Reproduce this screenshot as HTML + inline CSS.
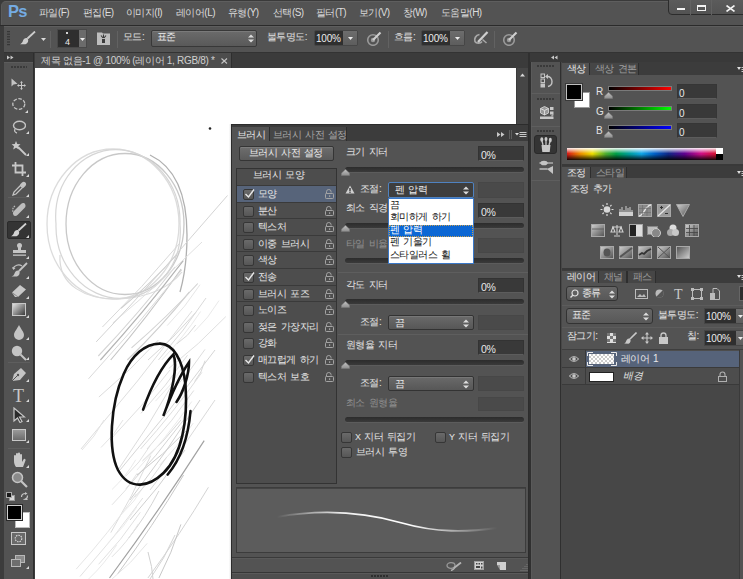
<!DOCTYPE html>
<html><head><meta charset="utf-8">
<style>
*{margin:0;padding:0;box-sizing:border-box}
html,body{width:743px;height:579px;overflow:hidden;background:#535353;font-family:"Liberation Sans",sans-serif;font-size:12px;color:#e0e0e0}
.a{position:absolute}
.t{position:absolute;white-space:nowrap;line-height:1}
</style></head><body>
<div class="a" style="left:0px;top:0px;width:743px;height:25px;background:#3a3a3a"></div>
<div class="a" style="left:1px;top:1px;width:742px;height:24px;background:#535353;border-top:1px solid #5e5e5e;border-left:1px solid #5a5a5a;border-radius:5px 0 0 0"></div>
<div class="a" style="left:0px;top:25px;width:743px;height:1px;background:#2b2b2b"></div>
<div class="a" style="left:0px;top:26px;width:743px;height:26px;background:#535353;border-top:1px solid #5e5e5e"></div>
<div class="a" style="left:0px;top:52px;width:743px;height:1px;background:#333"></div>
<div class="a" style="left:0px;top:26px;width:4px;height:553px;background:#3c3c3c"></div>
<div class="t" style="left:8px;top:3px;font-size:16.5px;font-weight:bold;color:#74abe2;letter-spacing:-0.8px">Ps</div>
<div class="t" style="left:39px;top:8px;font-size:10px;letter-spacing:-0.55px;word-spacing:1.5px;color:#dcdcdc">파일(F)</div>
<div class="t" style="left:83px;top:8px;font-size:10px;letter-spacing:-0.55px;word-spacing:1.5px;color:#dcdcdc">편집(E)</div>
<div class="t" style="left:126px;top:8px;font-size:10px;letter-spacing:-0.55px;word-spacing:1.5px;color:#dcdcdc">이미지(I)</div>
<div class="t" style="left:176px;top:8px;font-size:10px;letter-spacing:-0.55px;word-spacing:1.5px;color:#dcdcdc">레이어(L)</div>
<div class="t" style="left:228px;top:8px;font-size:10px;letter-spacing:-0.55px;word-spacing:1.5px;color:#dcdcdc">유형(Y)</div>
<div class="t" style="left:273px;top:8px;font-size:10px;letter-spacing:-0.55px;word-spacing:1.5px;color:#dcdcdc">선택(S)</div>
<div class="t" style="left:316px;top:8px;font-size:10px;letter-spacing:-0.55px;word-spacing:1.5px;color:#dcdcdc">필터(T)</div>
<div class="t" style="left:359px;top:8px;font-size:10px;letter-spacing:-0.55px;word-spacing:1.5px;color:#dcdcdc">보기(V)</div>
<div class="t" style="left:403px;top:8px;font-size:10px;letter-spacing:-0.55px;word-spacing:1.5px;color:#dcdcdc">창(W)</div>
<div class="t" style="left:441px;top:8px;font-size:10px;letter-spacing:-0.55px;word-spacing:1.5px;color:#dcdcdc">도움말(H)</div>
<div class="a" style="left:668px;top:-2px;width:77px;height:17px;background:linear-gradient(#5c5c5c,#535353);border:1px solid #2c2c2c;border-radius:0 0 0 4px"></div>
<div class="a" style="left:690px;top:0px;width:1px;height:15px;background:#333;border-right:1px solid #626262"></div>
<div class="a" style="left:711px;top:0px;width:1px;height:15px;background:#333;border-right:1px solid #626262"></div>
<div class="a" style="left:677px;top:8px;width:8px;height:2px;background:#f2f2f2"></div>
<div class="a" style="left:697px;top:5px;width:9px;height:6px;border:1px solid #f2f2f2;border-top-width:2px"></div>
<svg class="a" style="left:726px;top:5px;" width="9" height="7" viewBox="0 0 9 7"><path d="M0.5 0.5L8.5 6.5M8.5 0.5L0.5 6.5" stroke="#f2f2f2" stroke-width="1.6"/></svg>
<svg class="a" style="left:7px;top:30px;" width="3" height="16" viewBox="0 0 3 16"><rect x="0" y="1.0" width="3" height="1.2" fill="#363636"/><rect x="0" y="3.6" width="3" height="1.2" fill="#363636"/><rect x="0" y="6.2" width="3" height="1.2" fill="#363636"/><rect x="0" y="8.8" width="3" height="1.2" fill="#363636"/><rect x="0" y="11.4" width="3" height="1.2" fill="#363636"/><rect x="0" y="14.0" width="3" height="1.2" fill="#363636"/></svg>
<svg class="a" style="left:20px;top:31px;" width="16" height="14" viewBox="0 0 16 14"><path d="M15 0.5L7.5 7.5" stroke="#cdcdcd" stroke-width="1.8"/><path d="M7.5 7C4.5 6.5 3.3 8.5 2.8 10.2C2.3 11.8 1.2 12.6 0 13.2L5.5 13.3C8 12.3 8.8 10 7.8 8Z" fill="#cdcdcd"/></svg>
<svg class="a" style="left:41px;top:38px;" width="5" height="3" viewBox="0 0 5 3"><path d="M0 0h5L2.5 3z" fill="#dadada"/></svg>
<div class="a" style="left:50px;top:31px;width:1px;height:17px;background:#3d3d3d;border-right:1px solid #626262"></div>
<div class="a" style="left:117px;top:31px;width:1px;height:17px;background:#3d3d3d;border-right:1px solid #626262"></div>
<div class="a" style="left:388px;top:31px;width:1px;height:17px;background:#3d3d3d;border-right:1px solid #626262"></div>
<div class="a" style="left:494px;top:31px;width:1px;height:17px;background:#3d3d3d;border-right:1px solid #626262"></div>
<div class="a" style="left:57px;top:29px;width:30px;height:19px;background:#2e2e2e;border:1px solid #484848"></div>
<div class="a" style="left:79px;top:30px;width:7px;height:17px;background:#6b6b6b"></div>
<svg class="a" style="left:80px;top:38px;" width="5" height="3" viewBox="0 0 5 3"><path d="M0 0h5L2.5 3z" fill="#ececec"/></svg>
<div class="a" style="left:66px;top:32px;width:2px;height:2px;background:#d4d4d4"></div>
<div class="t" style="left:65px;top:38px;font-size:9px;color:#ececec">4</div>
<svg class="a" style="left:97px;top:31px;" width="13" height="14" viewBox="0 0 13 14"><path d="M0 1.5h5l1 1h7v11.5H0z" fill="#bdbdbd"/><path d="M4 4.5l2 2.5M6.5 3.5v3.5M9 4.5l-2 2.5" stroke="#3a3a3a" stroke-width="1.1" fill="none"/><rect x="5" y="8" width="3" height="4" fill="#3a3a3a"/></svg>
<div class="t" style="left:123px;top:32px;font-size:10px;letter-spacing:-0.55px;word-spacing:1.5px;">모드:</div>
<div class="a" style="left:151px;top:30px;width:106px;height:17px;border:1px solid #383838;border-radius:2px;background:linear-gradient(#6b6b6b,#595959);box-shadow:inset 0 1px #7a7a7a"></div>
<div class="t" style="left:157px;top:32px;font-size:10px;letter-spacing:-0.55px;word-spacing:1.5px;color:#f0f0f0">표준</div>
<svg class="a" style="left:248px;top:34px;" width="6" height="9" viewBox="0 0 6 9"><path d="M0 3.5L3 0.5L6 3.5zM0 5.5L3 8.5L6 5.5z" fill="#dcdcdc"/></svg>
<div class="t" style="left:267px;top:32px;font-size:10px;letter-spacing:-0.55px;word-spacing:1.5px;">불투명도:</div>
<div class="a" style="left:314px;top:30px;width:44px;height:16px;background:#2f2f2f;border:1px solid #464646;border-radius:2px"></div>
<div class="a" style="left:343px;top:31px;width:14px;height:14px;background:linear-gradient(#6d6d6d,#5d5d5d)"></div>
<svg class="a" style="left:348px;top:37px;" width="5" height="3" viewBox="0 0 5 3"><path d="M0 0h5L2.5 3z" fill="#ececec"/></svg>
<div class="t" style="left:316px;top:34px;font-size:10px;color:#ececec;letter-spacing:-0.2px">100%</div>
<div class="a" style="left:421px;top:30px;width:44px;height:16px;background:#2f2f2f;border:1px solid #464646;border-radius:2px"></div>
<div class="a" style="left:450px;top:31px;width:14px;height:14px;background:linear-gradient(#6d6d6d,#5d5d5d)"></div>
<svg class="a" style="left:455px;top:37px;" width="5" height="3" viewBox="0 0 5 3"><path d="M0 0h5L2.5 3z" fill="#ececec"/></svg>
<div class="t" style="left:423px;top:34px;font-size:10px;color:#ececec;letter-spacing:-0.2px">100%</div>
<div class="t" style="left:394px;top:32px;font-size:10px;letter-spacing:-0.55px;word-spacing:1.5px;">흐름:</div>
<svg class="a" style="left:366px;top:31px;" width="16" height="15" viewBox="0 0 16 15"><circle cx="7" cy="9" r="5.3" fill="none" stroke="#9a9a9a" stroke-width="1.6"/><circle cx="7" cy="9" r="2.2" fill="#9a9a9a"/><path d="M7 9L14.5 1.5" stroke="#cfcfcf" stroke-width="2.2"/></svg>
<svg class="a" style="left:502px;top:31px;" width="16" height="15" viewBox="0 0 16 15"><circle cx="7" cy="9" r="5.3" fill="none" stroke="#9a9a9a" stroke-width="1.6"/><circle cx="7" cy="9" r="2.2" fill="#9a9a9a"/><path d="M7 9L14.5 1.5" stroke="#cfcfcf" stroke-width="2.2"/></svg>
<svg class="a" style="left:473px;top:31px;" width="16" height="14" viewBox="0 0 16 14"><path d="M6.5 3.5C2.5 4 1 8 2 10.5C3.5 13 7.5 12.5 9 10.5" fill="none" stroke="#a8a8a8" stroke-width="1.7"/><path d="M5 11L14.5 1" stroke="#cfcfcf" stroke-width="2.2"/><path d="M9.5 8.5l4 3.5" stroke="#a8a8a8" stroke-width="1.5"/></svg>
<div class="a" style="left:4px;top:53px;width:29px;height:9px;background:#393939"></div>
<svg class="a" style="left:7px;top:55px;" width="7" height="5" viewBox="0 0 7 5"><path d="M0 0.5L3 2.5L0 4.5zM3.5 0.5L6.5 2.5L3.5 4.5z" fill="#c8c8c8"/></svg>
<div class="a" style="left:4px;top:62px;width:29px;height:517px;background:#535353;border-top:1px solid #5c5c5c"></div>
<div class="a" style="left:33px;top:53px;width:3px;height:526px;background:#3c3c3c;border-left:1px solid #2e2e2e"></div>
<svg class="a" style="left:11px;top:66px;" width="16" height="2" viewBox="0 0 16 2"><rect x="0" y="0" width="2" height="2" fill="#3a3a3a"/><rect x="3" y="0" width="2" height="2" fill="#3a3a3a"/><rect x="6" y="0" width="2" height="2" fill="#3a3a3a"/><rect x="9" y="0" width="2" height="2" fill="#3a3a3a"/><rect x="12" y="0" width="2" height="2" fill="#3a3a3a"/><rect x="15" y="0" width="2" height="2" fill="#3a3a3a"/></svg>
<svg class="a" style="left:11px;top:78px;" width="16" height="12" viewBox="0 0 16 12"><path d="M0.5 0.5L0.5 8.5L2.5 6.5L6.5 5.8Z" fill="#c4c4c4"/><path d="M10.5 4v7M7 7.5h7" stroke="#c8c8c8" stroke-width="1"/><path d="M10.5 3l-1.5 1.8h3zM10.5 12l-1.5-1.8h3zM6 7.5l1.8-1.5v3zM15 7.5l-1.8-1.5v3z" fill="#c8c8c8"/></svg>
<svg class="a" style="left:12px;top:98px;" width="14" height="12" viewBox="0 0 14 12"><ellipse cx="6.8" cy="6" rx="6" ry="5.3" fill="none" stroke="#c4c4c4" stroke-width="1.3" stroke-dasharray="3.5 1.6"/></svg>
<svg class="a" style="left:25px;top:110px;" width="3" height="3" viewBox="0 0 3 3"><path d="M3 0V3H0z" fill="#d8d8d8"/></svg>
<svg class="a" style="left:12px;top:120px;" width="14" height="14" viewBox="0 0 14 14"><ellipse cx="7.5" cy="5.5" rx="6" ry="4.3" fill="none" stroke="#c4c4c4" stroke-width="1.4"/><path d="M3 9C2 11 3 12.5 5 13" fill="none" stroke="#c4c4c4" stroke-width="1.3"/></svg>
<svg class="a" style="left:26px;top:131px;" width="3" height="3" viewBox="0 0 3 3"><path d="M3 0V3H0z" fill="#d8d8d8"/></svg>
<svg class="a" style="left:11px;top:140px;" width="17" height="16" viewBox="0 0 17 16"><path d="M5 1l1.3 3 3.2.3-2.4 2 .8 3.2L5 7.8 2.2 9.5 3 6.3.6 4.3l3.2-.3z" fill="#cacaca"/><path d="M7 7l8 8" stroke="#cacaca" stroke-width="1.8"/></svg>
<svg class="a" style="left:26px;top:153px;" width="3" height="3" viewBox="0 0 3 3"><path d="M3 0V3H0z" fill="#d8d8d8"/></svg>
<svg class="a" style="left:12px;top:162px;" width="15" height="14" viewBox="0 0 15 14"><path d="M3.5 0v10.5H14M0 3.5h10.5V14" fill="none" stroke="#c8c8c8" stroke-width="1.8"/></svg>
<svg class="a" style="left:26px;top:174px;" width="3" height="3" viewBox="0 0 3 3"><path d="M3 0V3H0z" fill="#d8d8d8"/></svg>
<svg class="a" style="left:12px;top:181px;" width="15" height="15" viewBox="0 0 15 15"><path d="M1 14l1-3 6.5-6.5 2 2L4 13z" fill="none" stroke="#c4c4c4" stroke-width="1.3"/><path d="M8 3.5l2-2c1-1 2.5-1 3.4 0s1 2.4 0 3.4l-2 2z" fill="#c4c4c4"/></svg>
<svg class="a" style="left:26px;top:194px;" width="3" height="3" viewBox="0 0 3 3"><path d="M3 0V3H0z" fill="#d8d8d8"/></svg>
<div class="a" style="left:8px;top:197px;width:22px;height:1px;background:#424242;border-bottom:1px solid #5e5e5e"></div>
<svg class="a" style="left:11px;top:201px;" width="16" height="16" viewBox="0 0 16 16"><path d="M3 10l7-7c1.5-1.5 3.5-1 4 0s1 2.5-.5 4l-7 7c-1.5 1.5-3.5 1-4 0s-1-2.5.5-4z" fill="#bdbdbd"/><path d="M4 5c-3 2-3 6 0 9" fill="none" stroke="#bdbdbd" stroke-width="1.2" stroke-dasharray="1.5 1"/></svg>
<svg class="a" style="left:26px;top:215px;" width="3" height="3" viewBox="0 0 3 3"><path d="M3 0V3H0z" fill="#d8d8d8"/></svg>
<div class="a" style="left:7px;top:221px;width:24px;height:18px;background:#343434;border:1px solid #2a2a2a;border-radius:2px"></div>
<svg class="a" style="left:11px;top:223px;" width="16" height="14" viewBox="0 0 16 14"><path d="M15 0.5L7.5 7.5" stroke="#d2d2d2" stroke-width="1.8"/><path d="M7.5 7C4.5 6.5 3.3 8.5 2.8 10.2C2.3 11.8 1.2 12.6 0 13.2L5.5 13.3C8 12.3 8.8 10 7.8 8Z" fill="#d2d2d2"/></svg>
<svg class="a" style="left:26px;top:235px;" width="3" height="3" viewBox="0 0 3 3"><path d="M3 0V3H0z" fill="#d8d8d8"/></svg>
<svg class="a" style="left:12px;top:243px;" width="15" height="14" viewBox="0 0 15 14"><circle cx="7.5" cy="2.5" r="2.5" fill="#c4c4c4"/><path d="M6 4h3v3h5v3H1V7h5z" fill="#c4c4c4"/><rect x="1" y="11.5" width="13" height="1.3" fill="#c4c4c4"/></svg>
<svg class="a" style="left:26px;top:256px;" width="3" height="3" viewBox="0 0 3 3"><path d="M3 0V3H0z" fill="#d8d8d8"/></svg>
<svg class="a" style="left:11px;top:262px;" width="17" height="16" viewBox="0 0 17 16"><path d="M16 1L8 9" stroke="#c4c4c4" stroke-width="1.8"/><path d="M8 8.5C5 8 4 10 3.5 11.5 3 13 2 14 0.5 14.5L6 14.5C8.5 13.5 9 11 8.5 9.5z" fill="#c4c4c4"/><path d="M2 7c1-4 6-5 9-3" fill="none" stroke="#c4c4c4" stroke-width="1.2"/><path d="M1 5l1.5 3 2-2z" fill="#c4c4c4"/></svg>
<svg class="a" style="left:26px;top:276px;" width="3" height="3" viewBox="0 0 3 3"><path d="M3 0V3H0z" fill="#d8d8d8"/></svg>
<svg class="a" style="left:11px;top:283px;" width="16" height="14" viewBox="0 0 16 14"><path d="M1 9.5L9 2l6 4.5-8 7.5H4z" fill="#c8c8c8"/><path d="M1 9.5l6 4.5" stroke="#8a8a8a" stroke-width="1"/></svg>
<svg class="a" style="left:26px;top:296px;" width="3" height="3" viewBox="0 0 3 3"><path d="M3 0V3H0z" fill="#d8d8d8"/></svg>
<div class="a" style="left:12px;top:303px;width:14px;height:13px;background:linear-gradient(135deg,#e0e0e0,#3a3a3a);border:1px solid #c8c8c8"></div>
<svg class="a" style="left:26px;top:315px;" width="3" height="3" viewBox="0 0 3 3"><path d="M3 0V3H0z" fill="#d8d8d8"/></svg>
<svg class="a" style="left:13px;top:325px;" width="12" height="15" viewBox="0 0 12 15"><path d="M6 0C4 4 1 7 1 10a5 5 0 0 0 10 0C11 7 8 4 6 0z" fill="#c4c4c4"/></svg>
<svg class="a" style="left:26px;top:337px;" width="3" height="3" viewBox="0 0 3 3"><path d="M3 0V3H0z" fill="#d8d8d8"/></svg>
<svg class="a" style="left:11px;top:345px;" width="16" height="16" viewBox="0 0 16 16"><circle cx="6" cy="6" r="5.2" fill="#c4c4c4"/><path d="M9.5 9.5L15 15" stroke="#c4c4c4" stroke-width="2"/></svg>
<svg class="a" style="left:26px;top:357px;" width="3" height="3" viewBox="0 0 3 3"><path d="M3 0V3H0z" fill="#d8d8d8"/></svg>
<div class="a" style="left:8px;top:362px;width:22px;height:1px;background:#424242;border-bottom:1px solid #5e5e5e"></div>
<svg class="a" style="left:11px;top:367px;" width="16" height="15" viewBox="0 0 16 15"><path d="M1 14L3 7 10 1l5 5-6 7z" fill="#c4c4c4"/><path d="M1 14l5-5" stroke="#535353" stroke-width="1"/><circle cx="7" cy="8" r="1.2" fill="#535353"/></svg>
<svg class="a" style="left:26px;top:379px;" width="3" height="3" viewBox="0 0 3 3"><path d="M3 0V3H0z" fill="#d8d8d8"/></svg>
<div class="t" style="left:13px;top:387px;font-family:Liberation Serif,serif;font-size:18px;color:#c8c8c8">T</div>
<svg class="a" style="left:26px;top:399px;" width="3" height="3" viewBox="0 0 3 3"><path d="M3 0V3H0z" fill="#d8d8d8"/></svg>
<svg class="a" style="left:13px;top:407px;" width="13" height="16" viewBox="0 0 13 16"><path d="M1 1v13l3.5-3 2.5 4.5 2-1-2.5-4.5 5 0z" fill="#2a2a2a" stroke="#c8c8c8" stroke-width="1.2"/></svg>
<svg class="a" style="left:26px;top:419px;" width="3" height="3" viewBox="0 0 3 3"><path d="M3 0V3H0z" fill="#d8d8d8"/></svg>
<div class="a" style="left:12px;top:429px;width:14px;height:12px;background:linear-gradient(#9a9a9a,#6c6c6c);border:1px solid #c8c8c8"></div>
<svg class="a" style="left:26px;top:440px;" width="3" height="3" viewBox="0 0 3 3"><path d="M3 0V3H0z" fill="#d8d8d8"/></svg>
<div class="a" style="left:8px;top:448px;width:22px;height:1px;background:#424242;border-bottom:1px solid #5e5e5e"></div>
<svg class="a" style="left:11px;top:452px;" width="17" height="17" viewBox="0 0 17 17"><path d="M3 9V4a1 1 0 0 1 2 0v4V2a1 1 0 0 1 2 0v6V1.5a1 1 0 0 1 2 0V8V3a1 1 0 0 1 2 0v7l1.5-2.5a1 1 0 0 1 2 1L12 15H5C3.5 13 3 11 3 9z" fill="#c8c8c8"/></svg>
<svg class="a" style="left:26px;top:465px;" width="3" height="3" viewBox="0 0 3 3"><path d="M3 0V3H0z" fill="#d8d8d8"/></svg>
<svg class="a" style="left:11px;top:471px;" width="17" height="17" viewBox="0 0 17 17"><circle cx="6.5" cy="6.5" r="5" fill="#8a8a8a" stroke="#c4c4c4" stroke-width="1.5"/><path d="M10 10l6 6" stroke="#c4c4c4" stroke-width="2.2"/></svg>
<svg class="a" style="left:6px;top:492px;" width="9" height="9" viewBox="0 0 9 9"><rect x="3.5" y="3.5" width="5" height="5" fill="#d8d8d8" stroke="#999" stroke-width="1"/><rect x="0.5" y="0.5" width="5" height="5" fill="#1a1a1a" stroke="#aaa" stroke-width="1"/></svg>
<svg class="a" style="left:20px;top:492px;" width="9" height="9" viewBox="0 0 9 9"><path d="M1.5 5C1.5 3 3 1.5 5.5 1.5" fill="none" stroke="#c4c4c4" stroke-width="1.2"/><path d="M5 0L7.5 1.5 5 3z" fill="#c4c4c4"/><path d="M7.5 3.5C7.5 6 6 7.5 3.5 7.5" fill="none" stroke="#c4c4c4" stroke-width="1.2"/><path d="M6 5.5L8 8H5z" fill="#c4c4c4"/></svg>
<div class="a" style="left:15px;top:512px;width:15px;height:16px;background:#fff;border:1px solid #bcbcbc"></div>
<div class="a" style="left:7px;top:505px;width:15px;height:15px;background:#000;border:1px solid #cfcfcf;box-shadow:0 0 0 1px #2a2a2a"></div>
<div class="a" style="left:11px;top:532px;width:15px;height:13px;background:#6a6a6a;border:1px solid #c8c8c8"></div>
<svg class="a" style="left:14px;top:534px;" width="9" height="9" viewBox="0 0 9 9"><circle cx="4.5" cy="4.5" r="3.3" fill="none" stroke="#e0e0e0" stroke-width="1.1" stroke-dasharray="1.5 1"/></svg>
<svg class="a" style="left:11px;top:555px;" width="15" height="12" viewBox="0 0 15 12"><rect x="4.5" y="0.5" width="9" height="7" fill="#8a8a8a" stroke="#b8b8b8"/><rect x="0.5" y="4.5" width="9" height="7" fill="#6e6e6e" stroke="#b8b8b8"/></svg>
<svg class="a" style="left:26px;top:566px;" width="3" height="3" viewBox="0 0 3 3"><path d="M3 0V3H0z" fill="#d8d8d8"/></svg>
<div class="a" style="left:36px;top:53px;width:494px;height:15px;background:#3b3b3b"></div>
<div class="a" style="left:35px;top:53px;width:197px;height:15px;background:#4d4d4d;border-right:1px solid #2e2e2e"></div>
<div class="t" style="left:41px;top:56px;font-size:10px;letter-spacing:-0.3px;color:#d0d0d0">제목 없음-1 @ 100% (레이어 1, RGB/8) *</div>
<svg class="a" style="left:221px;top:58px;" width="7" height="6" viewBox="0 0 7 6"><path d="M0.5 0.5L6 5.5M6 0.5L0.5 5.5" stroke="#c4c4c4" stroke-width="1.1"/></svg>
<div class="a" style="left:35px;top:68px;width:481px;height:511px;background:#fff"></div>
<div class="a" style="left:516px;top:68px;width:12px;height:56px;background:#464646;border-left:1px solid #3a3a3a"></div>
<svg class="a" style="left:520px;top:73px;" width="5" height="4" viewBox="0 0 5 4"><path d="M0 3.5L2.5 0.5L5 3.5z" fill="#d8d8d8"/></svg>
<div class="a" style="left:528px;top:53px;width:3px;height:526px;background:#303030"></div>
<svg class="a" style="left:0;top:0" width="516" height="579" viewBox="0 0 516 579"><defs><clipPath id="cc"><rect x="35" y="68" width="481" height="511"/></clipPath></defs><g clip-path="url(#cc)"><path d="M47 224A66 75 0 1 0 179 224A66 75 0 1 0 47 224" fill="none" stroke="#dcdcdc" stroke-width="1.3"/><path d="M66 224A59 70.5 0 1 0 184 224A59 70.5 0 1 0 66 224" fill="none" stroke="#c8c8c8" stroke-width="1.3"/><path d="M56 224A62 70 -8 1 0 180 224A62 70 -8 1 0 56 224" fill="none" stroke="#d6d6d6" stroke-width="1.2"/><path d="M150 155C175 167 187 195 187 235C187 258 184 278 180 292" fill="none" stroke="#b0b0b0" stroke-width="1.3"/><path d="M60 255C58 285 85 300 120 299C150 297 170 287 182 272" fill="none" stroke="#dadada" stroke-width="1.2"/><path d="M98.3 356Q138.65 313.5 175 267" fill="none" stroke="#d4d4d4" stroke-width="1.1"/><path d="M100.4 360Q143.85000000000002 312.35 183.3 260.7" fill="none" stroke="#b4b4b4" stroke-width="1.2"/><path d="M110.7 360Q147.95 316.5 181.2 269" fill="none" stroke="#c4c4c4" stroke-width="1.1"/><path d="M127.3 360Q160.4 327.9 189.5 291.8" fill="none" stroke="#cecece" stroke-width="1.1"/><path d="M131.5 347.8Q166.65 317.65 197.8 283.5" fill="none" stroke="#d2d2d2" stroke-width="1.1"/><path d="M148 360Q173.85 338.25 195.7 312.5" fill="none" stroke="#d8d8d8" stroke-width="1.0"/><path d="M112.8 323Q159.4 284.5 202 242" fill="none" stroke="#e0e0e0" stroke-width="1.0"/><path d="M102.4 327Q142.7 287.5 179 244" fill="none" stroke="#d8d8d8" stroke-width="1.0"/><path d="M121 308.4Q151.0 283.45 177 254.5" fill="none" stroke="#cdcdcd" stroke-width="1.1"/><path d="M158.4 360Q184.2 331.0 206 298" fill="none" stroke="#dadada" stroke-width="1.0"/><path d="M177 343.6Q188.35 336.3 195.7 325" fill="none" stroke="#d8d8d8" stroke-width="1.0"/><path d="M96.2 341.9Q163.85 270.7 227.5 195.5" fill="none" stroke="#d4d4d4" stroke-width="1.0"/><path d="M88.5 378.8Q137.15 326.4 181.8 270" fill="none" stroke="#dadada" stroke-width="1.0"/><path d="M98.9 397Q130.65 370.5 158.4 340" fill="none" stroke="#dcdcdc" stroke-width="1.0"/><path d="M168.8 368.4Q199.3 344.5 225.8 316.6" fill="none" stroke="#e0e0e0" stroke-width="1.0"/><path d="M194.7 381.4Q201.85 373.04999999999995 205 360.7" fill="none" stroke="#d8d8d8" stroke-width="1.0"/><path d="M81 449Q138.5 382.0 192 311" fill="none" stroke="#dedede" stroke-width="1.0"/><path d="M120 470Q169.5 412.0 215 350" fill="none" stroke="#d6d6d6" stroke-width="1.0"/><path d="M130 500Q167.0 452.0 200 400" fill="none" stroke="#d0d0d0" stroke-width="1.0"/><path d="M150 490Q184.5 447.0 215 400" fill="none" stroke="#dadada" stroke-width="1.0"/><path d="M110 440Q142.0 407.0 170 370" fill="none" stroke="#e0e0e0" stroke-width="1.0"/><path d="M109.5 578Q158.85 511.3 204.2 440.6" fill="none" stroke="#a2a2a2" stroke-width="1.2"/><path d="M117.7 573.8Q152.65 526.4 183.6 475" fill="none" stroke="#c8c8c8" stroke-width="1.0"/><path d="M110.8 532.6Q132.75 496.15 150.7 455.7" fill="none" stroke="#dcdcdc" stroke-width="1.0"/><path d="M128.7 538Q145.8 516.5 158.9 491" fill="none" stroke="#d4d4d4" stroke-width="1.0"/><path d="M147.9 578Q180.15 534.65 208.4 487.3" fill="none" stroke="#d4d4d4" stroke-width="1.0"/><path d="M148 552Q152.5 567.5 153 579" fill="none" stroke="#d0d0d0" stroke-width="1.0"/><path d="M158.9 578Q171.9 553.2 180.9 524.4" fill="none" stroke="#c8c8c8" stroke-width="1.0"/><path d="M150 579Q164.5 559.0 175 535" fill="none" stroke="#d4d4d4" stroke-width="1.0"/><path d="M82 450Q95.0 437.0 104 420" fill="none" stroke="#e4e4e4" stroke-width="1.0"/><path d="M101 447.5Q114.0 435.75 123 420" fill="none" stroke="#e4e4e4" stroke-width="1.0"/><path d="M130 520Q159.5 487.0 185 450" fill="none" stroke="#d0d0d0" stroke-width="1.0"/><path d="M126 488.7Q156.8 456.35 183.6 420" fill="none" stroke="#d4d4d4" stroke-width="1.0"/><path d="M137 475Q163.5 455.0 186 431" fill="none" stroke="#cccccc" stroke-width="1.0"/><path d="M142.4 461Q163.7 442.5 181 420" fill="none" stroke="#d8d8d8" stroke-width="1.0"/><path d="M118 470Q148.5 427.0 175 380" fill="none" stroke="#dcdcdc" stroke-width="1.0"/><path d="M112.0 504.8Q126.65 491.0 137.3 473.2" fill="none" stroke="#e2e2e2" stroke-width="1.0"/><path d="M112.1 489.4Q125.89999999999999 476.6 135.7 459.8" fill="none" stroke="#eaeaea" stroke-width="1.0"/><path d="M125.6 476.4Q139.89999999999998 463.0 150.2 445.6" fill="none" stroke="#e2e2e2" stroke-width="1.0"/><path d="M194.3 331.6Q208.65 318.1 219.0 300.6" fill="none" stroke="#eaeaea" stroke-width="1.0"/><path d="M88.6 579Q104.65 563.95 116.7 544.9" fill="none" stroke="#eaeaea" stroke-width="1.0"/><path d="M76.2 569.1Q108.30000000000001 533.5 136.4 493.9" fill="none" stroke="#e6e6e6" stroke-width="1.0"/><path d="M111.9 556.9Q127.15 542.4 138.4 523.9" fill="none" stroke="#e2e2e2" stroke-width="1.0"/><path d="M147.0 449.0Q172.4 421.75 193.8 390.5" fill="none" stroke="#dedede" stroke-width="1.0"/><path d="M159.7 465.1Q178.45 446.15 193.2 423.2" fill="none" stroke="#e6e6e6" stroke-width="1.0"/><path d="M141.0 413.3Q166.25 386.25 187.5 355.2" fill="none" stroke="#dedede" stroke-width="1.0"/><path d="M155.5 401.1Q171.2 386.0 182.9 366.9" fill="none" stroke="#eaeaea" stroke-width="1.0"/><path d="M98.6 564.3Q121.45 540.3 140.3 512.3" fill="none" stroke="#e2e2e2" stroke-width="1.0"/><path d="M168.5 395.1Q188.75 374.25 205.0 349.4" fill="none" stroke="#dedede" stroke-width="1.0"/><path d="M140.6 449.0Q173.25 412.7 201.9 372.4" fill="none" stroke="#dedede" stroke-width="1.0"/><path d="M136.9 470.1Q166.3 437.85 191.7 401.6" fill="none" stroke="#eaeaea" stroke-width="1.0"/><path d="M121.3 514.4Q134.75 502.1 144.2 485.8" fill="none" stroke="#eaeaea" stroke-width="1.0"/><path d="M134.6 497.2Q152.64999999999998 479.15 166.7 457.1" fill="none" stroke="#dedede" stroke-width="1.0"/><path d="M80.0 576.5Q113.4 539.25 142.8 498.0" fill="none" stroke="#e2e2e2" stroke-width="1.0"/><path d="M108.4 542.5Q124.55 526.8 136.7 507.1" fill="none" stroke="#eaeaea" stroke-width="1.0"/><path d="M161.9 359.9Q183.25 337.7 200.6 311.5" fill="none" stroke="#eaeaea" stroke-width="1.0"/><path d="M167.2 325.6Q185.6 307.15 200.0 284.7" fill="none" stroke="#e6e6e6" stroke-width="1.0"/><path d="M112.1 579Q131.64999999999998 563.2 147.2 543.4" fill="none" stroke="#e6e6e6" stroke-width="1.0"/><path d="M159.4 343.6C173 343 183 360 185.5 385C188 420 182 455 163.5 473C150 486 130 492 118 470C108 450 110 405 123.7 373.9C132 355 145 344 159.4 343.6" fill="none" stroke="#111" stroke-width="2.6" stroke-linecap="round"/><path d="M143.1 409.6C150 390 160 368 173.4 354.4C178 365 172 395 163.3 415.9C170 398 180 375 189 362.2C189 375 183 393 176.5 401.9" fill="none" stroke="#111" stroke-width="2.6" stroke-linecap="round"/><path d="M190.5 411C188 440 180 460 167.7 474.5" fill="none" stroke="#111" stroke-width="2.6" stroke-linecap="round"/><circle cx="210" cy="128.5" r="1.3" fill="#222"/></g></svg>
<div class="a" style="left:229px;top:124px;width:2px;height:455px;background:linear-gradient(90deg,rgba(0,0,0,0),rgba(0,0,0,.12))"></div>
<div class="a" style="left:231px;top:124px;width:298px;height:455px;background:#535353;border:1px solid #2c2c2c;border-bottom:none"></div>
<div class="a" style="left:232px;top:125px;width:296px;height:16px;background:#3c3c3c"></div>
<div class="a" style="left:232px;top:127px;width:37px;height:14px;background:#535353"></div>
<div class="t" style="left:237px;top:130px;font-size:10px;letter-spacing:-0.55px;word-spacing:1.5px;color:#e8e8e8">브러시</div>
<div class="a" style="left:269px;top:127px;width:78px;height:14px;background:#464646;border-left:1px solid #2e2e2e;border-right:1px solid #2e2e2e"></div>
<div class="t" style="left:273px;top:130px;font-size:10px;letter-spacing:-0.55px;word-spacing:1.5px;color:#a8a8a8">브러시 사전 설정</div>
<svg class="a" style="left:497px;top:132px;" width="8" height="5" viewBox="0 0 8 5"><path d="M0 0L3.5 2.5L0 5zM4 0L7.5 2.5L4 5z" fill="#c8c8c8"/></svg>
<div class="a" style="left:509px;top:130px;width:1px;height:9px;background:#5e5e5e"></div>
<div class="a" style="left:511px;top:130px;width:1px;height:9px;background:#5e5e5e"></div>
<svg class="a" style="left:515px;top:132px;" width="12" height="6" viewBox="0 0 12 6"><path d="M0 1h4L2 3.5z" fill="#e0e0e0"/><path d="M4.5 0.5h7M4.5 2.5h7M4.5 4.5h7" stroke="#c8c8c8" stroke-width="1"/></svg>
<div class="a" style="left:239px;top:146px;width:95px;height:15px;background:linear-gradient(#6e6e6e,#5a5a5a);border:1px solid #353535;border-radius:2px;box-shadow:inset 0 1px #7c7c7c"></div>
<div class="t" style="left:249px;top:148px;font-size:10px;letter-spacing:-0.55px;word-spacing:1.5px;color:#ececec">브러시 사전 설정</div>
<div class="a" style="left:236px;top:168px;width:101px;height:316px;background:#4d4d4d;border:1px solid #333"></div>
<div class="a" style="left:237px;top:169px;width:99px;height:17px;background:#4d4d4d;border-bottom:1px solid #3a3a3a"></div>
<div class="t" style="left:253px;top:170px;font-size:10px;letter-spacing:-0.55px;word-spacing:1.5px;color:#e6e6e6">브러시 모양</div>
<div class="a" style="left:237px;top:186px;width:99px;height:17px;background:#57647a"></div>
<div class="a" style="left:237px;top:202px;width:99px;height:1px;background:#3a3a3a"></div>
<div class="a" style="left:243px;top:189px;width:11px;height:11px;background:linear-gradient(#6a6a6a,#565656);border:1px solid #363636;border-radius:2px"></div>
<svg class="a" style="left:244px;top:188px;" width="11" height="11" viewBox="0 0 11 11"><path d="M1.5 6l3 3L10 1.5" fill="none" stroke="#e8e8e8" stroke-width="1.4"/></svg>
<div class="t" style="left:258px;top:189px;font-size:10px;letter-spacing:-0.55px;word-spacing:1.5px;color:#e6e6e6">모양</div>
<svg class="a" style="left:325px;top:189px;" width="9" height="10" viewBox="0 0 9 10"><path d="M1.5 4.5V2.8a2.3 2.3 0 0 1 4.6 0V3.5" fill="none" stroke="#a4a4a4" stroke-width="1"/><rect x="0.5" y="4.5" width="8" height="5" rx="0.8" fill="none" stroke="#a4a4a4" stroke-width="1"/><rect x="4" y="6.3" width="1.2" height="1.6" fill="#a4a4a4"/></svg>
<div class="a" style="left:237px;top:218px;width:99px;height:1px;background:#3a3a3a"></div>
<div class="a" style="left:243px;top:206px;width:11px;height:11px;background:linear-gradient(#6a6a6a,#565656);border:1px solid #363636;border-radius:2px"></div>
<div class="t" style="left:258px;top:206px;font-size:10px;letter-spacing:-0.55px;word-spacing:1.5px;color:#e6e6e6">분산</div>
<svg class="a" style="left:325px;top:206px;" width="9" height="10" viewBox="0 0 9 10"><path d="M1.5 4.5V2.8a2.3 2.3 0 0 1 4.6 0V3.5" fill="none" stroke="#a4a4a4" stroke-width="1"/><rect x="0.5" y="4.5" width="8" height="5" rx="0.8" fill="none" stroke="#a4a4a4" stroke-width="1"/><rect x="4" y="6.3" width="1.2" height="1.6" fill="#a4a4a4"/></svg>
<div class="a" style="left:237px;top:235px;width:99px;height:1px;background:#3a3a3a"></div>
<div class="a" style="left:243px;top:222px;width:11px;height:11px;background:linear-gradient(#6a6a6a,#565656);border:1px solid #363636;border-radius:2px"></div>
<div class="t" style="left:258px;top:222px;font-size:10px;letter-spacing:-0.55px;word-spacing:1.5px;color:#e6e6e6">텍스처</div>
<svg class="a" style="left:325px;top:222px;" width="9" height="10" viewBox="0 0 9 10"><path d="M1.5 4.5V2.8a2.3 2.3 0 0 1 4.6 0V3.5" fill="none" stroke="#a4a4a4" stroke-width="1"/><rect x="0.5" y="4.5" width="8" height="5" rx="0.8" fill="none" stroke="#a4a4a4" stroke-width="1"/><rect x="4" y="6.3" width="1.2" height="1.6" fill="#a4a4a4"/></svg>
<div class="a" style="left:237px;top:251px;width:99px;height:1px;background:#3a3a3a"></div>
<div class="a" style="left:243px;top:239px;width:11px;height:11px;background:linear-gradient(#6a6a6a,#565656);border:1px solid #363636;border-radius:2px"></div>
<div class="t" style="left:258px;top:239px;font-size:10px;letter-spacing:-0.55px;word-spacing:1.5px;color:#e6e6e6">이중 브러시</div>
<svg class="a" style="left:325px;top:239px;" width="9" height="10" viewBox="0 0 9 10"><path d="M1.5 4.5V2.8a2.3 2.3 0 0 1 4.6 0V3.5" fill="none" stroke="#a4a4a4" stroke-width="1"/><rect x="0.5" y="4.5" width="8" height="5" rx="0.8" fill="none" stroke="#a4a4a4" stroke-width="1"/><rect x="4" y="6.3" width="1.2" height="1.6" fill="#a4a4a4"/></svg>
<div class="a" style="left:237px;top:268px;width:99px;height:1px;background:#3a3a3a"></div>
<div class="a" style="left:243px;top:255px;width:11px;height:11px;background:linear-gradient(#6a6a6a,#565656);border:1px solid #363636;border-radius:2px"></div>
<div class="t" style="left:258px;top:255px;font-size:10px;letter-spacing:-0.55px;word-spacing:1.5px;color:#e6e6e6">색상</div>
<svg class="a" style="left:325px;top:255px;" width="9" height="10" viewBox="0 0 9 10"><path d="M1.5 4.5V2.8a2.3 2.3 0 0 1 4.6 0V3.5" fill="none" stroke="#a4a4a4" stroke-width="1"/><rect x="0.5" y="4.5" width="8" height="5" rx="0.8" fill="none" stroke="#a4a4a4" stroke-width="1"/><rect x="4" y="6.3" width="1.2" height="1.6" fill="#a4a4a4"/></svg>
<div class="a" style="left:237px;top:285px;width:99px;height:1px;background:#3a3a3a"></div>
<div class="a" style="left:243px;top:272px;width:11px;height:11px;background:linear-gradient(#6a6a6a,#565656);border:1px solid #363636;border-radius:2px"></div>
<svg class="a" style="left:244px;top:271px;" width="11" height="11" viewBox="0 0 11 11"><path d="M1.5 6l3 3L10 1.5" fill="none" stroke="#e8e8e8" stroke-width="1.4"/></svg>
<div class="t" style="left:258px;top:272px;font-size:10px;letter-spacing:-0.55px;word-spacing:1.5px;color:#e6e6e6">전송</div>
<svg class="a" style="left:325px;top:272px;" width="9" height="10" viewBox="0 0 9 10"><path d="M1.5 4.5V2.8a2.3 2.3 0 0 1 4.6 0V3.5" fill="none" stroke="#a4a4a4" stroke-width="1"/><rect x="0.5" y="4.5" width="8" height="5" rx="0.8" fill="none" stroke="#a4a4a4" stroke-width="1"/><rect x="4" y="6.3" width="1.2" height="1.6" fill="#a4a4a4"/></svg>
<div class="a" style="left:237px;top:301px;width:99px;height:1px;background:#3a3a3a"></div>
<div class="a" style="left:243px;top:289px;width:11px;height:11px;background:linear-gradient(#6a6a6a,#565656);border:1px solid #363636;border-radius:2px"></div>
<div class="t" style="left:258px;top:289px;font-size:10px;letter-spacing:-0.55px;word-spacing:1.5px;color:#e6e6e6">브러시 포즈</div>
<svg class="a" style="left:325px;top:289px;" width="9" height="10" viewBox="0 0 9 10"><path d="M1.5 4.5V2.8a2.3 2.3 0 0 1 4.6 0V3.5" fill="none" stroke="#a4a4a4" stroke-width="1"/><rect x="0.5" y="4.5" width="8" height="5" rx="0.8" fill="none" stroke="#a4a4a4" stroke-width="1"/><rect x="4" y="6.3" width="1.2" height="1.6" fill="#a4a4a4"/></svg>
<div class="a" style="left:243px;top:305px;width:11px;height:11px;background:linear-gradient(#6a6a6a,#565656);border:1px solid #363636;border-radius:2px"></div>
<div class="t" style="left:258px;top:305px;font-size:10px;letter-spacing:-0.55px;word-spacing:1.5px;color:#e6e6e6">노이즈</div>
<svg class="a" style="left:325px;top:305px;" width="9" height="10" viewBox="0 0 9 10"><path d="M1.5 4.5V2.8a2.3 2.3 0 0 1 4.6 0V3.5" fill="none" stroke="#a4a4a4" stroke-width="1"/><rect x="0.5" y="4.5" width="8" height="5" rx="0.8" fill="none" stroke="#a4a4a4" stroke-width="1"/><rect x="4" y="6.3" width="1.2" height="1.6" fill="#a4a4a4"/></svg>
<div class="a" style="left:243px;top:322px;width:11px;height:11px;background:linear-gradient(#6a6a6a,#565656);border:1px solid #363636;border-radius:2px"></div>
<div class="t" style="left:258px;top:322px;font-size:10px;letter-spacing:-0.55px;word-spacing:1.5px;color:#e6e6e6">젖은 가장자리</div>
<svg class="a" style="left:325px;top:322px;" width="9" height="10" viewBox="0 0 9 10"><path d="M1.5 4.5V2.8a2.3 2.3 0 0 1 4.6 0V3.5" fill="none" stroke="#a4a4a4" stroke-width="1"/><rect x="0.5" y="4.5" width="8" height="5" rx="0.8" fill="none" stroke="#a4a4a4" stroke-width="1"/><rect x="4" y="6.3" width="1.2" height="1.6" fill="#a4a4a4"/></svg>
<div class="a" style="left:243px;top:338px;width:11px;height:11px;background:linear-gradient(#6a6a6a,#565656);border:1px solid #363636;border-radius:2px"></div>
<div class="t" style="left:258px;top:338px;font-size:10px;letter-spacing:-0.55px;word-spacing:1.5px;color:#e6e6e6">강화</div>
<svg class="a" style="left:325px;top:338px;" width="9" height="10" viewBox="0 0 9 10"><path d="M1.5 4.5V2.8a2.3 2.3 0 0 1 4.6 0V3.5" fill="none" stroke="#a4a4a4" stroke-width="1"/><rect x="0.5" y="4.5" width="8" height="5" rx="0.8" fill="none" stroke="#a4a4a4" stroke-width="1"/><rect x="4" y="6.3" width="1.2" height="1.6" fill="#a4a4a4"/></svg>
<div class="a" style="left:243px;top:355px;width:11px;height:11px;background:linear-gradient(#6a6a6a,#565656);border:1px solid #363636;border-radius:2px"></div>
<svg class="a" style="left:244px;top:354px;" width="11" height="11" viewBox="0 0 11 11"><path d="M1.5 6l3 3L10 1.5" fill="none" stroke="#e8e8e8" stroke-width="1.4"/></svg>
<div class="t" style="left:258px;top:355px;font-size:10px;letter-spacing:-0.55px;word-spacing:1.5px;color:#e6e6e6">매끄럽게 하기</div>
<svg class="a" style="left:325px;top:355px;" width="9" height="10" viewBox="0 0 9 10"><path d="M1.5 4.5V2.8a2.3 2.3 0 0 1 4.6 0V3.5" fill="none" stroke="#a4a4a4" stroke-width="1"/><rect x="0.5" y="4.5" width="8" height="5" rx="0.8" fill="none" stroke="#a4a4a4" stroke-width="1"/><rect x="4" y="6.3" width="1.2" height="1.6" fill="#a4a4a4"/></svg>
<div class="a" style="left:243px;top:372px;width:11px;height:11px;background:linear-gradient(#6a6a6a,#565656);border:1px solid #363636;border-radius:2px"></div>
<div class="t" style="left:258px;top:372px;font-size:10px;letter-spacing:-0.55px;word-spacing:1.5px;color:#e6e6e6">텍스처 보호</div>
<svg class="a" style="left:325px;top:372px;" width="9" height="10" viewBox="0 0 9 10"><path d="M1.5 4.5V2.8a2.3 2.3 0 0 1 4.6 0V3.5" fill="none" stroke="#a4a4a4" stroke-width="1"/><rect x="0.5" y="4.5" width="8" height="5" rx="0.8" fill="none" stroke="#a4a4a4" stroke-width="1"/><rect x="4" y="6.3" width="1.2" height="1.6" fill="#a4a4a4"/></svg>
<div class="t" style="left:346px;top:147px;font-size:10px;letter-spacing:-0.55px;word-spacing:1.5px;color:#e4e4e4">크기 지터</div>
<div class="a" style="left:478px;top:146px;width:46px;height:15px;background:#393939;border:1px solid #333;border-bottom-color:#5c5c5c"></div>
<div class="t" style="left:481px;top:150px;font-size:10.5px;color:#e8e8e8;letter-spacing:-0.3px">0%</div>
<div class="a" style="left:345px;top:167px;width:179px;height:5px;background:linear-gradient(#2c2c2c,#3a3a3a);border-radius:3px;box-shadow:0 1px #5c5c5c"></div>
<svg class="a" style="left:341px;top:169px;" width="9" height="7" viewBox="0 0 9 7"><defs><linearGradient id="th" x1="0" y1="0" x2="0" y2="1"><stop offset="0" stop-color="#c4c4c4"/><stop offset="1" stop-color="#8c8c8c"/></linearGradient></defs><path d="M4.5 0.3L8.7 4.2V6.7H0.3V4.2z" fill="url(#th)" stroke="#6a6a6a" stroke-width="0.5"/></svg>
<svg class="a" style="left:345px;top:185px;" width="10" height="9" viewBox="0 0 10 9"><path d="M5 0.5L9.5 8.5H0.5z" fill="#cfcfcf"/><path d="M5 3v3" stroke="#333" stroke-width="1.3"/><rect x="4.3" y="6.6" width="1.4" height="1.2" fill="#333"/></svg>
<div class="t" style="left:360px;top:184px;font-size:10px;letter-spacing:-0.55px;word-spacing:1.5px;color:#e4e4e4">조절:</div>
<div class="a" style="left:388px;top:182px;width:86px;height:16px;background:#3e3e3e;border:1px solid #4f82c0;border-radius:2px"></div>
<div class="t" style="left:395px;top:185px;font-size:10px;letter-spacing:-0.55px;word-spacing:1.5px;color:#ececec">펜 압력</div>
<svg class="a" style="left:463px;top:186px;" width="6" height="9" viewBox="0 0 6 9"><path d="M0 3.5L3 0.5L6 3.5zM0 5.5L3 8.5L6 5.5z" fill="#dcdcdc"/></svg>
<div class="a" style="left:478px;top:182px;width:46px;height:16px;background:#4a4a4a;border:1px solid #474747"></div>
<div class="t" style="left:346px;top:203px;font-size:10px;letter-spacing:-0.55px;word-spacing:1.5px;color:#e4e4e4">최소 직경</div>
<div class="a" style="left:478px;top:203px;width:46px;height:15px;background:#393939;border:1px solid #333;border-bottom-color:#5c5c5c"></div>
<div class="t" style="left:481px;top:207px;font-size:10.5px;color:#e8e8e8;letter-spacing:-0.3px">0%</div>
<div class="a" style="left:345px;top:223px;width:179px;height:5px;background:linear-gradient(#2c2c2c,#3a3a3a);border-radius:3px;box-shadow:0 1px #5c5c5c"></div>
<svg class="a" style="left:341px;top:225px;" width="9" height="7" viewBox="0 0 9 7"><defs><linearGradient id="th" x1="0" y1="0" x2="0" y2="1"><stop offset="0" stop-color="#c4c4c4"/><stop offset="1" stop-color="#8c8c8c"/></linearGradient></defs><path d="M4.5 0.3L8.7 4.2V6.7H0.3V4.2z" fill="url(#th)" stroke="#6a6a6a" stroke-width="0.5"/></svg>
<div class="t" style="left:346px;top:239px;font-size:10px;letter-spacing:-0.55px;word-spacing:1.5px;color:#909090">타일 비율</div>
<div class="a" style="left:478px;top:238px;width:46px;height:15px;background:#4a4a4a;border:1px solid #474747"></div>
<div class="a" style="left:345px;top:258px;width:179px;height:5px;background:linear-gradient(#2c2c2c,#3a3a3a);border-radius:3px;box-shadow:0 1px #5c5c5c"></div>
<div class="a" style="left:338px;top:272px;width:190px;height:1px;background:#3c3c3c;border-bottom:1px solid #5e5e5e"></div>
<div class="t" style="left:346px;top:280px;font-size:10px;letter-spacing:-0.55px;word-spacing:1.5px;color:#e4e4e4">각도 지터</div>
<div class="a" style="left:478px;top:278px;width:46px;height:15px;background:#393939;border:1px solid #333;border-bottom-color:#5c5c5c"></div>
<div class="t" style="left:481px;top:282px;font-size:10.5px;color:#e8e8e8;letter-spacing:-0.3px">0%</div>
<div class="a" style="left:345px;top:299px;width:179px;height:5px;background:linear-gradient(#2c2c2c,#3a3a3a);border-radius:3px;box-shadow:0 1px #5c5c5c"></div>
<svg class="a" style="left:341px;top:301px;" width="9" height="7" viewBox="0 0 9 7"><defs><linearGradient id="th" x1="0" y1="0" x2="0" y2="1"><stop offset="0" stop-color="#c4c4c4"/><stop offset="1" stop-color="#8c8c8c"/></linearGradient></defs><path d="M4.5 0.3L8.7 4.2V6.7H0.3V4.2z" fill="url(#th)" stroke="#6a6a6a" stroke-width="0.5"/></svg>
<div class="t" style="left:360px;top:317px;font-size:10px;letter-spacing:-0.55px;word-spacing:1.5px;color:#e4e4e4">조절:</div>
<div class="a" style="left:388px;top:315px;width:86px;height:15px;background:linear-gradient(#6a6a6a,#575757);border:1px solid #333;border-radius:2px;box-shadow:inset 0 1px #777"></div>
<div class="t" style="left:395px;top:318px;font-size:10px;letter-spacing:-0.55px;word-spacing:1.5px;color:#ececec">끔</div>
<svg class="a" style="left:463px;top:319px;" width="6" height="9" viewBox="0 0 6 9"><path d="M0 3.5L3 0.5L6 3.5zM0 5.5L3 8.5L6 5.5z" fill="#dcdcdc"/></svg>
<div class="a" style="left:478px;top:315px;width:46px;height:15px;background:#4a4a4a;border:1px solid #474747"></div>
<div class="a" style="left:338px;top:334px;width:190px;height:1px;background:#3c3c3c;border-bottom:1px solid #5e5e5e"></div>
<div class="t" style="left:346px;top:340px;font-size:10px;letter-spacing:-0.55px;word-spacing:1.5px;color:#e4e4e4">원형율 지터</div>
<div class="a" style="left:478px;top:340px;width:46px;height:15px;background:#393939;border:1px solid #333;border-bottom-color:#5c5c5c"></div>
<div class="t" style="left:481px;top:344px;font-size:10.5px;color:#e8e8e8;letter-spacing:-0.3px">0%</div>
<div class="a" style="left:345px;top:360px;width:179px;height:5px;background:linear-gradient(#2c2c2c,#3a3a3a);border-radius:3px;box-shadow:0 1px #5c5c5c"></div>
<svg class="a" style="left:341px;top:362px;" width="9" height="7" viewBox="0 0 9 7"><defs><linearGradient id="th" x1="0" y1="0" x2="0" y2="1"><stop offset="0" stop-color="#c4c4c4"/><stop offset="1" stop-color="#8c8c8c"/></linearGradient></defs><path d="M4.5 0.3L8.7 4.2V6.7H0.3V4.2z" fill="url(#th)" stroke="#6a6a6a" stroke-width="0.5"/></svg>
<div class="t" style="left:360px;top:378px;font-size:10px;letter-spacing:-0.55px;word-spacing:1.5px;color:#e4e4e4">조절:</div>
<div class="a" style="left:388px;top:376px;width:86px;height:15px;background:linear-gradient(#6a6a6a,#575757);border:1px solid #333;border-radius:2px;box-shadow:inset 0 1px #777"></div>
<div class="t" style="left:395px;top:379px;font-size:10px;letter-spacing:-0.55px;word-spacing:1.5px;color:#ececec">끔</div>
<svg class="a" style="left:463px;top:380px;" width="6" height="9" viewBox="0 0 6 9"><path d="M0 3.5L3 0.5L6 3.5zM0 5.5L3 8.5L6 5.5z" fill="#dcdcdc"/></svg>
<div class="a" style="left:478px;top:376px;width:46px;height:15px;background:#4a4a4a;border:1px solid #474747"></div>
<div class="t" style="left:346px;top:398px;font-size:10px;letter-spacing:-0.55px;word-spacing:1.5px;color:#909090">최소 원형율</div>
<div class="a" style="left:478px;top:397px;width:46px;height:14px;background:#4a4a4a;border:1px solid #474747"></div>
<div class="a" style="left:345px;top:417px;width:179px;height:5px;background:linear-gradient(#2c2c2c,#3a3a3a);border-radius:3px;box-shadow:0 1px #5c5c5c"></div>
<div class="a" style="left:341px;top:432px;width:11px;height:11px;background:linear-gradient(#6a6a6a,#565656);border:1px solid #363636;border-radius:2px"></div>
<div class="t" style="left:355px;top:432px;font-size:10px;letter-spacing:-0.55px;word-spacing:1.5px;color:#e4e4e4"><span style="font-size:9px">X</span> 지터 뒤집기</div>
<div class="a" style="left:435px;top:432px;width:11px;height:11px;background:linear-gradient(#6a6a6a,#565656);border:1px solid #363636;border-radius:2px"></div>
<div class="t" style="left:449px;top:432px;font-size:10px;letter-spacing:-0.55px;word-spacing:1.5px;color:#e4e4e4"><span style="font-size:9px">Y</span> 지터 뒤집기</div>
<div class="a" style="left:341px;top:447px;width:11px;height:11px;background:linear-gradient(#6a6a6a,#565656);border:1px solid #363636;border-radius:2px"></div>
<div class="t" style="left:356px;top:447px;font-size:10px;letter-spacing:-0.55px;word-spacing:1.5px;color:#e4e4e4">브러시 투영</div>
<div class="a" style="left:236px;top:487px;width:290px;height:66px;background:#5c5c5c;border:1px solid #3c3c3c;box-shadow:inset 0 1px #444"></div>
<svg class="a" style="left:237px;top:488px;" width="288" height="64" viewBox="0 0 288 64"><defs><linearGradient id="sg" x1="0" x2="1"><stop offset="0" stop-color="#fff" stop-opacity="0"/><stop offset="0.3" stop-color="#fff" stop-opacity="0.9"/><stop offset="0.6" stop-color="#fff" stop-opacity="1"/><stop offset="1" stop-color="#fff" stop-opacity="0"/></linearGradient></defs><path d="M40 29C90 20 130 25 165 35C200 45 230 44 260 40" fill="none" stroke="url(#sg)" stroke-width="1.8"/></svg>
<div class="a" style="left:232px;top:557px;width:296px;height:1px;background:#3a3a3a"></div>
<div class="a" style="left:232px;top:558px;width:296px;height:1px;background:#5a5a5a"></div>
<div class="a" style="left:232px;top:572px;width:296px;height:1px;background:#363636"></div>
<div class="a" style="left:232px;top:573px;width:296px;height:6px;background:#4e4e4e;border-top:1px solid #5a5a5a"></div>
<svg class="a" style="left:371px;top:575px;" width="18" height="2" viewBox="0 0 18 2"><rect x="0" y="0" width="2" height="2" fill="#2e2e2e"/><rect x="3" y="0" width="2" height="2" fill="#2e2e2e"/><rect x="6" y="0" width="2" height="2" fill="#2e2e2e"/><rect x="9" y="0" width="2" height="2" fill="#2e2e2e"/><rect x="12" y="0" width="2" height="2" fill="#2e2e2e"/><rect x="15" y="0" width="2" height="2" fill="#2e2e2e"/></svg>
<svg class="a" style="left:446px;top:562px;" width="16" height="9" viewBox="0 0 16 9"><ellipse cx="5" cy="3.5" rx="4" ry="2.8" fill="none" stroke="#9a9a9a" stroke-width="1.3"/><path d="M8 6L15 0.5" stroke="#b4b4b4" stroke-width="1.8"/><path d="M5 8.5C6.5 8 8 7 8.5 6" stroke="#b4b4b4" stroke-width="1.5" fill="none"/></svg>
<div class="a" style="left:474px;top:561px;width:10px;height:9px;background:#d2d2d2;border:1px solid #a0a0a0"></div>
<svg class="a" style="left:475px;top:562px;" width="8" height="7" viewBox="0 0 8 7"><path d="M1 1h1.5v1.5H1zM3.5 1h1.5v1.5H3.5zM6 1h1.5v1.5H6zM1 4h4v2H1zM6 4.5h1.5v2H6z" fill="#444"/></svg>
<svg class="a" style="left:497px;top:562px;" width="9" height="8" viewBox="0 0 9 8"><path d="M0 0h9v8H3V3H0z" fill="#cfcfcf"/><path d="M0 3h3v5z" fill="#9a9a9a"/></svg>
<svg class="a" style="left:520px;top:563px;" width="8" height="8" viewBox="0 0 8 8"><path d="M7 1v1M5 3v1M7 3v1M3 5v1M5 5v1M7 5v1M1 7v1M3 7v1M5 7v1M7 7v1" stroke="#7a7a7a" stroke-width="1"/></svg>
<div class="a" style="left:388px;top:198px;width:86px;height:66px;background:#fff;border:1px solid #3a78c8"></div>
<div class="a" style="left:389px;top:225px;width:84px;height:12px;background:#0c67d4;outline:1px dotted #c8a050;outline-offset:-1px"></div>
<div class="t" style="left:390px;top:200px;font-size:10px;letter-spacing:-0.55px;word-spacing:1.5px;color:#111">끔</div>
<div class="t" style="left:390px;top:212px;font-size:10px;letter-spacing:-0.55px;word-spacing:1.5px;color:#111">회미하게 하기</div>
<div class="t" style="left:390px;top:225px;font-size:10px;letter-spacing:-0.55px;word-spacing:1.5px;color:#fff">펜 압력</div>
<div class="t" style="left:390px;top:237px;font-size:10px;letter-spacing:-0.55px;word-spacing:1.5px;color:#111">펜 기울기</div>
<div class="t" style="left:390px;top:250px;font-size:10px;letter-spacing:-0.55px;word-spacing:1.5px;color:#111">스타일러스 휠</div>
<div class="a" style="left:530px;top:53px;width:213px;height:9px;background:#393939"></div>
<svg class="a" style="left:551px;top:55px;" width="7" height="5" viewBox="0 0 7 5"><path d="M3 0.5L0 2.5L3 4.5zM6.5 0.5L3.5 2.5L6.5 4.5z" fill="#c8c8c8"/></svg>
<div class="a" style="left:531px;top:62px;width:30px;height:517px;background:#535353;border-left:1px solid #5a5a5a"></div>
<div class="a" style="left:560px;top:62px;width:2px;height:517px;background:#2f2f2f;border-right:1px solid #474747"></div>
<div class="a" style="left:531px;top:93px;width:29px;height:1px;background:#3a3a3a;border-bottom:1px solid #5e5e5e"></div>
<div class="a" style="left:531px;top:126px;width:29px;height:1px;background:#3a3a3a;border-bottom:1px solid #5e5e5e"></div>
<div class="a" style="left:531px;top:180px;width:29px;height:1px;background:#3a3a3a;border-bottom:1px solid #5e5e5e"></div>
<svg class="a" style="left:537px;top:65px;" width="17" height="2" viewBox="0 0 17 2"><rect x="0" y="0" width="2" height="2" fill="#393939"/><rect x="3" y="0" width="2" height="2" fill="#393939"/><rect x="6" y="0" width="2" height="2" fill="#393939"/><rect x="9" y="0" width="2" height="2" fill="#393939"/><rect x="12" y="0" width="2" height="2" fill="#393939"/><rect x="15" y="0" width="2" height="2" fill="#393939"/></svg>
<svg class="a" style="left:537px;top:98px;" width="17" height="2" viewBox="0 0 17 2"><rect x="0" y="0" width="2" height="2" fill="#393939"/><rect x="3" y="0" width="2" height="2" fill="#393939"/><rect x="6" y="0" width="2" height="2" fill="#393939"/><rect x="9" y="0" width="2" height="2" fill="#393939"/><rect x="12" y="0" width="2" height="2" fill="#393939"/><rect x="15" y="0" width="2" height="2" fill="#393939"/></svg>
<svg class="a" style="left:537px;top:130px;" width="17" height="2" viewBox="0 0 17 2"><rect x="0" y="0" width="2" height="2" fill="#393939"/><rect x="3" y="0" width="2" height="2" fill="#393939"/><rect x="6" y="0" width="2" height="2" fill="#393939"/><rect x="9" y="0" width="2" height="2" fill="#393939"/><rect x="12" y="0" width="2" height="2" fill="#393939"/><rect x="15" y="0" width="2" height="2" fill="#393939"/></svg>
<svg class="a" style="left:540px;top:73px;" width="13" height="15" viewBox="0 0 13 15"><rect x="1" y="1" width="3.5" height="3.5" fill="none" stroke="#c4c4c4" stroke-width="1"/><rect x="1" y="6" width="3.5" height="3.5" fill="none" stroke="#c4c4c4" stroke-width="1"/><rect x="0.5" y="10.5" width="4.5" height="4" fill="#c4c4c4"/><path d="M6.5 3.5C10 3 12 5.5 12 8.5S10.5 13 8 13.5" fill="none" stroke="#c4c4c4" stroke-width="1.4"/><path d="M5 3.5L8 1V6z" fill="#c4c4c4"/></svg>
<svg class="a" style="left:540px;top:106px;" width="14" height="13" viewBox="0 0 14 13"><path d="M4.5 0.5L8.5 2.5v4.5L4.5 9 0.5 7V2.5z" fill="#9a9a9a" stroke="#c8c8c8" stroke-width="1"/><path d="M0.5 2.5L4.5 4.5 8.5 2.5M4.5 4.5V9" stroke="#e0e0e0" stroke-width="0.9" fill="none"/><rect x="10" y="1" width="3.5" height="3" fill="#c8c8c8"/><rect x="10" y="5.5" width="3.5" height="3" fill="#c8c8c8"/><path d="M0 10.5h13.5v2.5H0z" fill="#c8c8c8"/><path d="M12 10.5v-1.5h1.5" fill="none" stroke="#c8c8c8"/></svg>
<div class="a" style="left:534px;top:135px;width:23px;height:19px;background:#343434;border:1px solid #2a2a2a;border-radius:3px"></div>
<svg class="a" style="left:540px;top:137px;" width="12" height="15" viewBox="0 0 12 15"><path d="M3 8L1.5 2M6 8V1.5M9 8l1.5-5" stroke="#c8c8c8" stroke-width="1.3"/><ellipse cx="1.8" cy="2.5" rx="1.5" ry="2.3" fill="#c8c8c8"/><ellipse cx="6" cy="2" rx="1.5" ry="2" fill="#c8c8c8"/><ellipse cx="10.3" cy="3" rx="1.5" ry="2.3" fill="#c8c8c8"/><path d="M1.5 8h9l-0.8 7H2.3z" fill="#c8c8c8"/></svg>
<svg class="a" style="left:539px;top:160px;" width="15" height="14" viewBox="0 0 15 14"><path d="M0.5 3h8" stroke="#c4c4c4" stroke-width="1.4"/><ellipse cx="5" cy="3" rx="3.5" ry="2.3" fill="#c4c4c4"/><path d="M8 3h6" stroke="#c4c4c4" stroke-width="1.2"/><path d="M0.5 9h8" stroke="#c4c4c4" stroke-width="1.4"/><path d="M8 9L14 6v8z" fill="#c4c4c4"/></svg>
<div class="a" style="left:562px;top:62px;width:181px;height:517px;background:#535353"></div>
<div class="a" style="left:562px;top:62px;width:181px;height:13px;background:#3c3c3c"></div>
<div class="a" style="left:562px;top:63px;width:27px;height:12px;background:#535353"></div>
<div class="t" style="left:567px;top:64px;font-size:10px;letter-spacing:-0.55px;word-spacing:1.5px;color:#e8e8e8">색상</div>
<div class="a" style="left:589px;top:63px;width:50px;height:12px;background:#464646;border-left:1px solid #2e2e2e;border-right:1px solid #2e2e2e"></div>
<div class="t" style="left:595px;top:64px;font-size:10px;letter-spacing:-0.55px;word-spacing:1.5px;color:#9e9e9e">색상 견본</div>
<svg class="a" style="left:737px;top:67px;" width="8" height="5" viewBox="0 0 8 5"><path d="M0 0h4L2 3z" fill="#e0e0e0"/><path d="M4.5 0.5h4M4.5 2.5h4M4.5 4.5h4" stroke="#c8c8c8" stroke-width="1"/></svg>
<div class="a" style="left:574px;top:92px;width:16px;height:16px;background:#fff;border:1px solid #9a9a9a"></div>
<div class="a" style="left:566px;top:84px;width:16px;height:16px;background:#000;border:1px solid #c0c0c0;box-shadow:0 0 0 1px #3a3a3a"></div>
<div class="t" style="left:596px;top:87px;font-size:10px;color:#e4e4e4">R</div>
<div class="a" style="left:608px;top:86px;width:64px;height:5px;background:linear-gradient(90deg,#000,#f00);border:1px solid #7a7a7a"></div>
<svg class="a" style="left:604px;top:92px;" width="9" height="7" viewBox="0 0 9 7"><path d="M4.5 0.3L8.7 4.2V6.7H0.3V4.2z" fill="url(#th)" stroke="#6a6a6a" stroke-width="0.5"/></svg>
<div class="a" style="left:677px;top:84px;width:40px;height:15px;background:#393939;border:1px solid #363636;border-bottom-color:#5c5c5c"></div>
<div class="t" style="left:679px;top:89px;font-size:10px;color:#e8e8e8">0</div>
<div class="t" style="left:596px;top:107px;font-size:10px;color:#e4e4e4">G</div>
<div class="a" style="left:608px;top:106px;width:64px;height:5px;background:linear-gradient(90deg,#000,#0f0);border:1px solid #7a7a7a"></div>
<svg class="a" style="left:604px;top:112px;" width="9" height="7" viewBox="0 0 9 7"><path d="M4.5 0.3L8.7 4.2V6.7H0.3V4.2z" fill="url(#th)" stroke="#6a6a6a" stroke-width="0.5"/></svg>
<div class="a" style="left:677px;top:104px;width:40px;height:15px;background:#393939;border:1px solid #363636;border-bottom-color:#5c5c5c"></div>
<div class="t" style="left:679px;top:109px;font-size:10px;color:#e8e8e8">0</div>
<div class="t" style="left:596px;top:126px;font-size:10px;color:#e4e4e4">B</div>
<div class="a" style="left:608px;top:125px;width:64px;height:5px;background:linear-gradient(90deg,#000,#00f);border:1px solid #7a7a7a"></div>
<svg class="a" style="left:604px;top:131px;" width="9" height="7" viewBox="0 0 9 7"><path d="M4.5 0.3L8.7 4.2V6.7H0.3V4.2z" fill="url(#th)" stroke="#6a6a6a" stroke-width="0.5"/></svg>
<div class="a" style="left:677px;top:123px;width:40px;height:15px;background:#393939;border:1px solid #363636;border-bottom-color:#5c5c5c"></div>
<div class="t" style="left:679px;top:128px;font-size:10px;color:#e8e8e8">0</div>
<div class="a" style="left:567px;top:148px;width:149px;height:12px;background:linear-gradient(rgba(255,255,255,.95) 0%,rgba(255,255,255,0) 45%),linear-gradient(rgba(0,0,0,0) 50%,rgba(0,0,0,.9) 100%),linear-gradient(90deg,#d81818 0%,#f09000 9%,#f0e000 17%,#50b030 26%,#00a048 33%,#00a0a0 42%,#10a8e8 50%,#0060c8 59%,#102888 68%,#600090 79%,#d01088 90%,#d81030 100%)"></div>
<div class="a" style="left:716px;top:148px;width:7px;height:6px;background:#fff"></div>
<div class="a" style="left:716px;top:154px;width:7px;height:6px;background:#000"></div>
<div class="a" style="left:562px;top:164px;width:181px;height:2px;background:#393939"></div>
<div class="a" style="left:562px;top:166px;width:181px;height:12px;background:#3c3c3c"></div>
<div class="a" style="left:562px;top:167px;width:28px;height:11px;background:#535353"></div>
<div class="t" style="left:567px;top:168px;font-size:10px;letter-spacing:-0.55px;word-spacing:1.5px;color:#e8e8e8">조정</div>
<div class="a" style="left:590px;top:167px;width:37px;height:11px;background:#464646;border-left:1px solid #2e2e2e;border-right:1px solid #2e2e2e"></div>
<div class="t" style="left:596px;top:168px;font-size:10px;letter-spacing:-0.55px;word-spacing:1.5px;color:#9e9e9e">스타일</div>
<svg class="a" style="left:737px;top:171px;" width="8" height="5" viewBox="0 0 8 5"><path d="M0 0h4L2 3z" fill="#e0e0e0"/><path d="M4.5 0.5h4M4.5 2.5h4M4.5 4.5h4" stroke="#c8c8c8" stroke-width="1"/></svg>
<div class="t" style="left:570px;top:184px;font-size:10px;letter-spacing:-0.55px;word-spacing:1.5px;color:#e8e8e8">조정 추가</div>
<svg width="0" height="0" style="position:absolute"><defs><linearGradient id="ga" x1="0" y1="0" x2="1" y2="1"><stop offset="0" stop-color="#d0d0d0"/><stop offset="1" stop-color="#505050"/></linearGradient></defs></svg>
<svg class="a" style="left:600px;top:203px;" width="14" height="13" viewBox="0 0 14 13"><circle cx="7" cy="6.5" r="3.3" fill="#d8d8d8"/><path d="M7 0v2M7 11v2M0.5 6.5h2M11.5 6.5h2M2.5 2l1.3 1.3M10.2 9.7l1.3 1.3M11.5 2l-1.3 1.3M3.8 9.7L2.5 11" stroke="#d8d8d8" stroke-width="1.2"/></svg>
<svg class="a" style="left:619px;top:204px;" width="14" height="13" viewBox="0 0 14 13"><path d="M0 8h15v4H0z" fill="#d0d0d0"/><path d="M1 8V5M3 8V3M5 8V6M7 8V2M9 8V4M11 8V3M13 8V6" stroke="#d0d0d0" stroke-width="1"/></svg>
<svg class="a" style="left:638px;top:204px;" width="14" height="13" viewBox="0 0 14 13"><rect x="0.5" y="0.5" width="13" height="12" fill="#8a8a8a" stroke="#a8a8a8"/><path d="M1 12C6 12 7 1 13 1" fill="none" stroke="#e8e8e8" stroke-width="1.3"/><path d="M4.5 1v11M9 1v11M1 4.5h12M1 8.5h12" stroke="#6a6a6a" stroke-width="0.6"/></svg>
<svg class="a" style="left:657px;top:204px;" width="14" height="13" viewBox="0 0 14 13"><rect x="0.5" y="0.5" width="13" height="12" fill="#9a9a9a" stroke="#a8a8a8"/><path d="M1 12L13 1" stroke="#e8e8e8" stroke-width="1.2"/><path d="M3 3.5h3M4.5 2v3M8 9.5h3" stroke="#333" stroke-width="1"/></svg>
<svg class="a" style="left:676px;top:204px;" width="14" height="13" viewBox="0 0 14 13"><path d="M0.5 0.5h13L7 12.5z" fill="url(#ga)" stroke="#a8a8a8"/></svg>
<svg class="a" style="left:591px;top:224px;" width="14" height="13" viewBox="0 0 14 13"><rect x="0.5" y="0.5" width="13" height="12" fill="url(#ga)" stroke="#a8a8a8"/><path d="M1 5h12" stroke="#555" stroke-width="0.8"/></svg>
<svg class="a" style="left:610px;top:224px;" width="14" height="13" viewBox="0 0 14 13"><path d="M7 1v10M2 3h10M1 8l2-5 2 5zM9 8l2-5 2 5zM4 12h6" stroke="#d0d0d0" stroke-width="1.1" fill="none"/></svg>
<svg class="a" style="left:629px;top:224px;" width="14" height="13" viewBox="0 0 14 13"><rect x="0.5" y="0.5" width="13" height="12" fill="#ddd" stroke="#a8a8a8"/><rect x="1" y="1" width="6" height="11" fill="#222"/></svg>
<svg class="a" style="left:647px;top:224px;" width="14" height="13" viewBox="0 0 14 13"><rect x="0.5" y="2.5" width="10" height="8" fill="#bdbdbd" stroke="#888"/><circle cx="9" cy="9" r="4.5" fill="#888" stroke="#ccc"/></svg>
<svg class="a" style="left:666px;top:224px;" width="14" height="13" viewBox="0 0 14 13"><circle cx="7" cy="4" r="3.5" fill="#ddd"/><circle cx="4.5" cy="8.5" r="3.5" fill="#aaa"/><circle cx="9.5" cy="8.5" r="3.5" fill="#c8c8c8"/></svg>
<svg class="a" style="left:685px;top:224px;" width="14" height="13" viewBox="0 0 14 13"><rect x="0.5" y="0.5" width="13" height="12" fill="url(#ga)" stroke="#a8a8a8"/><path d="M4.5 1v11M9 1v11M1 4.5h12M1 8.5h12" stroke="#444" stroke-width="0.8"/></svg>
<svg class="a" style="left:600px;top:246px;" width="14" height="13" viewBox="0 0 14 13"><rect x="0.5" y="0.5" width="13" height="12" fill="url(#ga)" stroke="#a8a8a8"/><ellipse cx="7" cy="6.5" rx="3.5" ry="4" fill="#555"/></svg>
<svg class="a" style="left:619px;top:246px;" width="14" height="13" viewBox="0 0 14 13"><rect x="0.5" y="0.5" width="13" height="12" fill="url(#ga)" stroke="#a8a8a8"/><path d="M1 11L13 2" stroke="#555" stroke-width="2"/></svg>
<svg class="a" style="left:638px;top:246px;" width="14" height="13" viewBox="0 0 14 13"><rect x="0.5" y="0.5" width="13" height="12" fill="url(#ga)" stroke="#a8a8a8"/><path d="M1 9L4 7L6 8L9 5L13 3" stroke="#333" stroke-width="1.8" fill="none"/></svg>
<svg class="a" style="left:657px;top:246px;" width="14" height="13" viewBox="0 0 14 13"><rect x="0.5" y="0.5" width="13" height="12" fill="url(#ga)" stroke="#a8a8a8"/><path d="M1 1L13 12M13 1L1 12" stroke="#555" stroke-width="1"/></svg>
<svg class="a" style="left:676px;top:246px;" width="14" height="13" viewBox="0 0 14 13"><rect x="0.5" y="0.5" width="13" height="12" fill="url(#ga)" stroke="#a8a8a8" transform="rotate(180 7 6.5)"/></svg>
<div class="a" style="left:562px;top:268px;width:181px;height:2px;background:#393939"></div>
<div class="a" style="left:562px;top:270px;width:181px;height:13px;background:#3c3c3c"></div>
<div class="a" style="left:562px;top:271px;width:36px;height:12px;background:#535353"></div>
<div class="t" style="left:567px;top:272px;font-size:10px;letter-spacing:-0.55px;word-spacing:1.5px;color:#e8e8e8">레이어</div>
<div class="a" style="left:598px;top:271px;width:29px;height:12px;background:#464646;border-left:1px solid #2e2e2e;border-right:1px solid #2e2e2e"></div>
<div class="t" style="left:604px;top:272px;font-size:10px;letter-spacing:-0.55px;word-spacing:1.5px;color:#9e9e9e">채널</div>
<div class="a" style="left:627px;top:271px;width:29px;height:12px;background:#464646;border-left:1px solid #2e2e2e;border-right:1px solid #2e2e2e"></div>
<div class="t" style="left:633px;top:272px;font-size:10px;letter-spacing:-0.55px;word-spacing:1.5px;color:#9e9e9e">패스</div>
<svg class="a" style="left:737px;top:275px;" width="8" height="5" viewBox="0 0 8 5"><path d="M0 0h4L2 3z" fill="#e0e0e0"/><path d="M4.5 0.5h4M4.5 2.5h4M4.5 4.5h4" stroke="#c8c8c8" stroke-width="1"/></svg>
<div class="a" style="left:566px;top:286px;width:52px;height:15px;background:linear-gradient(#666,#585858);border:1px solid #333;border-radius:3px"></div>
<svg class="a" style="left:570px;top:289px;" width="9" height="9" viewBox="0 0 9 9"><circle cx="5" cy="4" r="3" fill="none" stroke="#ddd" stroke-width="1.2"/><path d="M3 6L0.5 8.5" stroke="#ddd" stroke-width="1.4"/></svg>
<div class="t" style="left:582px;top:288px;font-size:10px;letter-spacing:-0.55px;word-spacing:1.5px;color:#ececec">종류</div>
<svg class="a" style="left:609px;top:290px;" width="6" height="9" viewBox="0 0 6 9"><path d="M0 3.5L3 0.5L6 3.5zM0 5.5L3 8.5L6 5.5z" fill="#dcdcdc"/></svg>
<svg class="a" style="left:635px;top:289px;" width="13" height="10" viewBox="0 0 13 10"><rect x="0.5" y="0.5" width="12" height="9" fill="none" stroke="#bbb"/><path d="M2 8l3-3 2 2 2-2 2 3z" fill="#bbb"/></svg>
<svg class="a" style="left:655px;top:289px;" width="9" height="9" viewBox="0 0 9 9"><circle cx="4.5" cy="4.5" r="4" fill="#bbb"/><path d="M1.5 7.5L7.5 1.5A4 4 0 0 1 1.5 7.5z" fill="#555"/></svg>
<div class="t" style="left:674px;top:288px;font-family:Liberation Serif,serif;font-size:14px;color:#c8c8c8">T</div>
<svg class="a" style="left:691px;top:288px;" width="12" height="12" viewBox="0 0 12 12"><rect x="1.5" y="1.5" width="9" height="9" fill="none" stroke="#bbb"/><rect x="0" y="0" width="3" height="3" fill="#bbb"/><rect x="9" y="0" width="3" height="3" fill="#bbb"/><rect x="0" y="9" width="3" height="3" fill="#bbb"/><rect x="9" y="9" width="3" height="3" fill="#bbb"/></svg>
<svg class="a" style="left:710px;top:288px;" width="10" height="12" viewBox="0 0 10 12"><path d="M3 0.5h4l2.5 2.5v8.5H3z" fill="none" stroke="#bbb"/><rect x="0" y="5" width="5" height="7" fill="#bbb"/></svg>
<div class="a" style="left:739px;top:286px;width:5px;height:15px;background:#2e2e2e;border:1px solid #666"></div>
<div class="a" style="left:562px;top:305px;width:181px;height:1px;background:#3e3e3e;border-bottom:1px solid #5c5c5c"></div>
<div class="a" style="left:566px;top:308px;width:87px;height:16px;background:linear-gradient(#666,#585858);border:1px solid #333;border-radius:3px"></div>
<div class="t" style="left:572px;top:310px;font-size:10px;letter-spacing:-0.55px;word-spacing:1.5px;color:#ececec">표준</div>
<svg class="a" style="left:643px;top:312px;" width="6" height="9" viewBox="0 0 6 9"><path d="M0 3.5L3 0.5L6 3.5zM0 5.5L3 8.5L6 5.5z" fill="#dcdcdc"/></svg>
<div class="t" style="left:658px;top:310px;font-size:10px;letter-spacing:-0.55px;word-spacing:1.5px;color:#e4e4e4">불투명도:</div>
<div class="a" style="left:704px;top:308px;width:40px;height:16px;background:#2f2f2f;border:1px solid #464646"></div>
<div class="a" style="left:736px;top:309px;width:8px;height:14px;background:linear-gradient(#6d6d6d,#5d5d5d)"></div>
<svg class="a" style="left:738px;top:315px;" width="5" height="3" viewBox="0 0 5 3"><path d="M0 0h5L2.5 3z" fill="#ececec"/></svg>
<div class="t" style="left:706px;top:312px;font-size:10px;color:#ececec;letter-spacing:-0.2px">100%</div>
<div class="a" style="left:704px;top:330px;width:40px;height:16px;background:#2f2f2f;border:1px solid #464646"></div>
<div class="a" style="left:736px;top:331px;width:8px;height:14px;background:linear-gradient(#6d6d6d,#5d5d5d)"></div>
<svg class="a" style="left:738px;top:337px;" width="5" height="3" viewBox="0 0 5 3"><path d="M0 0h5L2.5 3z" fill="#ececec"/></svg>
<div class="t" style="left:706px;top:334px;font-size:10px;color:#ececec;letter-spacing:-0.2px">100%</div>
<div class="a" style="left:562px;top:327px;width:181px;height:1px;background:#3e3e3e;border-bottom:1px solid #5c5c5c"></div>
<div class="t" style="left:567px;top:331px;font-size:10px;letter-spacing:-0.55px;word-spacing:1.5px;color:#e4e4e4">잠그기:</div>
<svg class="a" style="left:607px;top:333px;" width="9" height="10" viewBox="0 0 9 10"><rect x="0" y="0" width="9" height="10" fill="#ddd"/><path d="M0 0h3v3H0zM6 0h3v3H6zM3 3h3v3H3zM0 6h3v3H0zM6 6h3v3H6z" fill="#777"/></svg>
<svg class="a" style="left:624px;top:332px;" width="13" height="12" viewBox="0 0 13 12"><path d="M12.5 0.5L6 7" stroke="#c8c8c8" stroke-width="1.6"/><path d="M6 6.5C3.5 6 2.5 8 2 9.5 1.5 10.8 0.8 11.3 0 11.6L4.5 11.7C6.5 11 7 9 6.3 7.3z" fill="#c8c8c8"/></svg>
<svg class="a" style="left:641px;top:332px;" width="12" height="12" viewBox="0 0 12 12"><path d="M6 1v10M1 6h10" stroke="#c8c8c8" stroke-width="1.1"/><path d="M6 0l-2 2.5h4zM6 12l-2-2.5h4zM0 6l2.5-2v4zM12 6l-2.5-2v4z" fill="#c8c8c8"/></svg>
<svg class="a" style="left:659px;top:332px;" width="9" height="12" viewBox="0 0 9 12"><path d="M2 5V3.5a2.5 2.5 0 0 1 5 0V5" fill="none" stroke="#c8c8c8" stroke-width="1.3"/><rect x="0" y="5" width="9" height="7" fill="#c8c8c8"/></svg>
<div class="t" style="left:687px;top:331px;font-size:10px;letter-spacing:-0.55px;word-spacing:1.5px;color:#e4e4e4">칠:</div>
<div class="a" style="left:562px;top:349px;width:181px;height:1px;background:#3e3e3e"></div>
<div class="a" style="left:562px;top:350px;width:177px;height:229px;background:#474747"></div>
<div class="a" style="left:562px;top:350px;width:177px;height:35px;background:#4d4d4d"></div>
<div class="a" style="left:586px;top:351px;width:153px;height:16px;background:#56637a"></div>
<div class="a" style="left:562px;top:367px;width:177px;height:1px;background:#3a3a3a"></div>
<div class="a" style="left:562px;top:384px;width:177px;height:1px;background:#3a3a3a"></div>
<div class="a" style="left:585px;top:350px;width:1px;height:35px;background:#3a3a3a"></div>
<div class="a" style="left:739px;top:350px;width:4px;height:229px;background:#535353;border-left:1px solid #3a3a3a"></div>
<svg class="a" style="left:569px;top:355px;" width="10" height="8" viewBox="0 0 10 8"><path d="M0.5 4C2.5 1 7.5 1 9.5 4C7.5 7 2.5 7 0.5 4z" fill="none" stroke="#c8c8c8" stroke-width="1"/><circle cx="5" cy="4" r="1.8" fill="#c8c8c8"/></svg>
<svg class="a" style="left:569px;top:372px;" width="10" height="8" viewBox="0 0 10 8"><path d="M0.5 4C2.5 1 7.5 1 9.5 4C7.5 7 2.5 7 0.5 4z" fill="none" stroke="#c8c8c8" stroke-width="1"/><circle cx="5" cy="4" r="1.8" fill="#c8c8c8"/></svg>
<div class="a" style="left:589px;top:354px;width:25px;height:10px;background:#fff;background-image:linear-gradient(45deg,#ccc 25%,transparent 25%,transparent 75%,#ccc 75%),linear-gradient(45deg,#ccc 25%,transparent 25%,transparent 75%,#ccc 75%);background-size:4px 4px;background-position:0 0,2px 2px"></div>
<svg class="a" style="left:587px;top:352px;" width="30" height="14" viewBox="0 0 30 14"><path d="M0.5 4V0.5H6M24 0.5h5.5V4M0.5 10v3.5H6M24 13.5h5.5V10" fill="none" stroke="#e8e8e8" stroke-width="1"/></svg>
<div class="t" style="left:621px;top:354px;font-size:10px;letter-spacing:-0.55px;word-spacing:1.5px;color:#e8e8e8">레이어 1</div>
<div class="a" style="left:589px;top:372px;width:25px;height:10px;background:#fff;border:1px solid #222"></div>
<div class="t" style="left:623px;top:371px;font-size:10px;letter-spacing:-0.4px;font-style:italic;color:#e0e0e0">배경</div>
<svg class="a" style="left:718px;top:371px;" width="9" height="11" viewBox="0 0 9 11"><path d="M2 5V3.5a2.5 2.5 0 0 1 5 0V5" fill="none" stroke="#b0b0b0" stroke-width="1.1"/><rect x="0.5" y="5.5" width="8" height="5" fill="none" stroke="#b0b0b0"/></svg>
</body></html>
